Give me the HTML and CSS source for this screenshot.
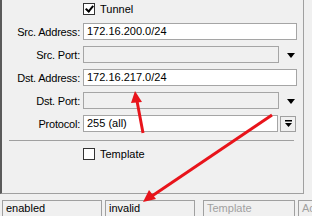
FILE: index.html
```
<!DOCTYPE html>
<html lang="en">

<head>
    <meta charset="UTF-8">
    <title>Tunnel Filter</title>
    <link rel="stylesheet" href="styles.css">
</head>

<body>
    <div class="window">
        <div class="panel">
            <div class="check-row">
                <span class="checkbox checked"></span>
                <span class="check-label">Tunnel</span>
            </div>

            <div class="row">
                <label class="label">Src. Address:</label>
                <div class="field wide">172.16.200.0/24</div>
            </div>
            <div class="row">
                <label class="label">Src. Port:</label>
                <div class="field short disabled"></div>
                <span class="drop"></span>
            </div>
            <div class="row">
                <label class="label">Dst. Address:</label>
                <div class="field wide">172.16.217.0/24</div>
            </div>
            <div class="row">
                <label class="label">Dst. Port:</label>
                <div class="field short disabled"></div>
                <span class="drop"></span>
            </div>
            <div class="row">
                <label class="label">Protocol:</label>
                <div class="field proto">255 (all)</div>
                <span class="proto-btn">
                    <svg width="9" height="9" viewBox="0 0 9 9">
                        <rect x="1" y="1" width="7" height="1.5" fill="#000"/>
                        <polygon points="1,4 8,4 4.5,8" fill="#000"/>
                    </svg>
                </span>
            </div>

            <div class="separator"></div>

            <div class="check-row template-row">
                <span class="checkbox"></span>
                <span class="check-label">Template</span>
            </div>
        </div>

        <div class="statusbar">
            <div class="cell c1">enabled</div>
            <div class="cell c2">invalid</div>
            <div class="cell c3 muted">Template</div>
            <div class="cell c4 muted">Ac</div>
        </div>
    </div>

    <!-- red annotation arrows drawn over the dialog -->
    <svg class="annotations" width="312" height="216" viewBox="0 0 312 216">
        <line x1="143" y1="133" x2="137" y2="101" stroke="#e8141b" stroke-width="3"/>
        <polygon points="135,91 131,103 142,102" fill="#e8141b"/>
        <line x1="272" y1="115" x2="152" y2="196" stroke="#e8141b" stroke-width="3"/>
        <polygon points="143,202 149,190 156,199" fill="#e8141b"/>
    </svg>
</body>

</html>
```

FILE: styles.css
```
body {
    margin: 0;
    width: 312px;
    height: 216px;
    overflow: hidden;
    background-color: #f0f0f0;
    font-family: "Liberation Sans", Arial, sans-serif;
    font-size: 11px;
    color: #000;
    position: relative;
}

.window {
    width: 312px;
    height: 216px;
}

.panel {
    box-sizing: border-box;
    width: 304px;
    height: 194px;
    border-left: 2px solid #5a5a5a;
    border-right: 1px solid #a0a0a0;
    border-bottom: 1px solid #a0a0a0;
    padding-top: 3px;
}

.check-row {
    display: flex;
    align-items: center;
    height: 12px;
    padding-left: 81px;
}

.checkbox {
    box-sizing: border-box;
    width: 12px;
    height: 12px;
    border: 1px solid #333;
    background-color: #fff;
    position: relative;
}

.checkbox.checked::after {
    content: "";
    position: absolute;
    left: 3px;
    top: 0px;
    width: 3px;
    height: 6px;
    border-right: 2px solid #000;
    border-bottom: 2px solid #000;
    transform: rotate(40deg);
}

.check-label {
    margin-left: 5px;
}

.row {
    display: flex;
    align-items: center;
    height: 17px;
    margin-top: 6px;
}

.check-row + .row {
    margin-top: 8px;
}

.label {
    width: 78px;
    padding-right: 3px;
    text-align: right;
    letter-spacing: -0.2px;
}

.field {
    box-sizing: border-box;
    height: 17px;
    border: 1px solid #a5a5a5;
    background-color: #fff;
    padding-left: 3px;
    line-height: 15px;
    white-space: nowrap;
    overflow: hidden;
}

.field.wide {
    width: 214px;
}

.field.short {
    width: 196px;
}

.field.proto {
    width: 195px;
}

.field.disabled {
    background-color: #f0f0f0;
}

.drop {
    width: 0;
    height: 0;
    margin-left: 8px;
    margin-top: 2px;
    border-left: 4px solid transparent;
    border-right: 4px solid transparent;
    border-top: 5px solid #000;
}

.proto-btn {
    box-sizing: border-box;
    width: 16px;
    height: 16px;
    margin-left: 2px;
    border: 1px solid #a0a0a0;
    display: flex;
    align-items: center;
    justify-content: center;
}

.separator {
    margin: 8px 9px 0 7px;
    border-top: 1px solid #a0a0a0;
}

.template-row {
    margin-top: 7px;
}

.statusbar {
    display: flex;
    gap: 3px;
    padding: 6px 0 0 2px;
    overflow: hidden;
}

.cell {
    box-sizing: border-box;
    flex-shrink: 0;
    height: 20px;
    border: 1px solid #a0a0a0;
    padding: 1px 0 0 3px;
    white-space: nowrap;
    overflow: hidden;
}

.c1 { width: 100px; }
.c2 { width: 90px; }
.c3 { width: 92px; margin-left: 5px; }
.c4 { width: 40px; }

.muted {
    color: #a0a0a0;
}

.annotations {
    position: absolute;
    left: 0;
    top: 0;
    pointer-events: none;
}
```
